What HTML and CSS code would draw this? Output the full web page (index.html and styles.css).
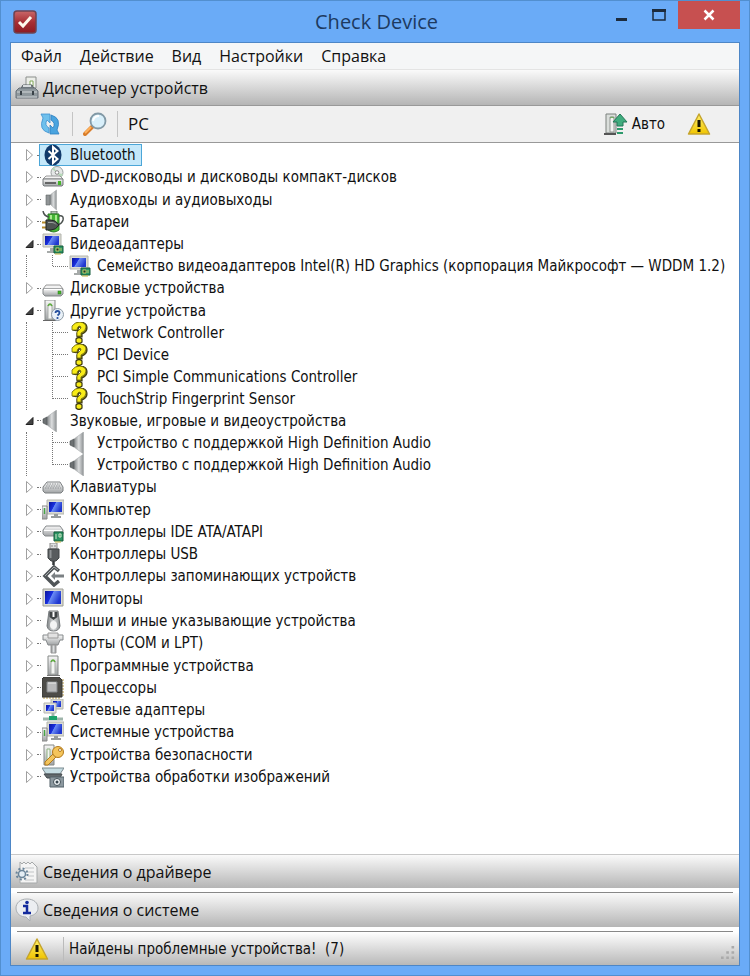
FILE: index.html
```html
<!DOCTYPE html>
<html lang="ru">
<head>
  <meta charset="UTF-8">
  <meta name="viewport" content="width=device-width, initial-scale=1">
  <title>Check Device</title>
  <link rel="stylesheet" href="styles.css">
</head>
<body>

  <!-- Icon set -->
  <svg class="sprite" aria-hidden="true">
    <defs>
      <linearGradient id="gScreen" x1="0" y1="0" x2="1" y2="0.4">
        <stop offset="0" stop-color="#0a149c"/><stop offset="0.45" stop-color="#1a30e0"/><stop offset="0.5" stop-color="#6a8cf4"/><stop offset="1" stop-color="#2038d0"/>
      </linearGradient>
      <linearGradient id="gMetal" x1="0" y1="0" x2="0" y2="1">
        <stop offset="0" stop-color="#f8f8f8"/><stop offset="1" stop-color="#a0a3a5"/>
      </linearGradient>
      <linearGradient id="gSide" x1="0" y1="0" x2="1" y2="0">
        <stop offset="0" stop-color="#808486"/><stop offset="0.5" stop-color="#dcdedf"/><stop offset="1" stop-color="#8d9193"/>
      </linearGradient>
      <linearGradient id="gWarn" x1="0" y1="0" x2="0" y2="1">
        <stop offset="0" stop-color="#fff06a"/><stop offset="1" stop-color="#f0c400"/>
      </linearGradient>
      <linearGradient id="gRed" x1="0" y1="0" x2="0" y2="1">
        <stop offset="0" stop-color="#c9686a"/><stop offset="0.5" stop-color="#a82f35"/><stop offset="1" stop-color="#8d1a22"/>
      </linearGradient>
    </defs>

    <symbol id="open" viewBox="0 0 14 14"><path d="M10 3.500v7H3z" fill="#444" stroke="#222"/></symbol>
    <symbol id="closed" viewBox="0 0 14 14"><path d="M3.500 1.500L9.500 7l-6 5.500z" fill="#fff" stroke="#a0a0a0"/></symbol>

    <symbol id="bluetooth" viewBox="0 0 22 22">
      <ellipse cx="11" cy="11" rx="8.500" ry="10.500" fill="#123a6b"/>
      <path d="M6.500 7l9 8-4.500 4V3l4.500 4-9 8" fill="none" stroke="#fff" stroke-width="2"/>
    </symbol>
    <symbol id="disk" viewBox="0 0 22 22">
      <path d="M4 8h14l3 4H1z" fill="#f3f3f3" stroke="#999"/>
      <path d="M1 12h20v5l-2 2H3l-2-2z" fill="url(#gMetal)" stroke="#85898b"/>
      <path d="M2 12.500h18" stroke="#fff"/>
      <rect x="16" y="14" width="3" height="3" fill="#46b52a" stroke="#277b18" stroke-width=".5"/>
    </symbol>
    <symbol id="dvd" viewBox="0 0 22 22">
      <circle cx="15" cy="6.500" r="6" fill="#e4e7e7" stroke="#9aa0a0"/>
      <path d="M15 7l-5-4 2-2zM15 7l6 1-2 4z" fill="#b6d8b8"/>
      <circle cx="15" cy="6.500" r="1.800" fill="#fff" stroke="#888"/>
      <path d="M4 10h14l3 3H1z" fill="#f3f3f3" stroke="#999"/>
      <path d="M1 13h20v6l-1 1H2l-1-1z" fill="url(#gMetal)" stroke="#777b7d"/>
      <path d="M3 17h11" stroke="#444" stroke-width="1.500"/>
      <rect x="16" y="15" width="3" height="4" fill="#46b52a"/>
    </symbol>
    <symbol id="speaker" viewBox="0 0 22 22">
      <path d="M14.500 0v22L5 15V7z" fill="url(#gSide)" stroke="#a6a9ab" stroke-width=".6"/>
      <path d="M1 9l4-2v8l-4-2z" fill="#6c7072" stroke="#4c5052" stroke-width=".6"/>
    </symbol>
    <symbol id="audio" viewBox="0 0 22 22">
      <path d="M14.500 1v20L8 15V6z" fill="url(#gSide)" stroke="#a6a9ab" stroke-width=".6"/>
      <path d="M4 6h4v10H4z" fill="#909496" stroke="#606466" stroke-width=".6"/>
    </symbol>
    <symbol id="battery" viewBox="0 0 22 22">
      <path d="M9 0h6v3H9z" fill="#b9c4b9" stroke="#687868"/>
      <path d="M6 3h11v16q-5 4-11 0z" fill="#45b535" stroke="#2c7d25"/>
      <path d="M9 4v5M14 4v13" stroke="#a9ea8e" stroke-width="2"/>
      <path d="M1 0q1 5 6 6M17 5q5-1 4 4-1 4-6 5" fill="none" stroke="#4c5250" stroke-width="1.500"/>
      <path d="M0 11.500h6M0 16.500h6" stroke="#b58a2c" stroke-width="1.800"/>
      <path d="M4 9h5q5 0 8 5-3 5-8 5H4z" fill="#4e5352" stroke="#202423"/>
      <path d="M6 11.500h4q3 0 4 2" fill="none" stroke="#9ca09f"/>
    </symbol>
    <symbol id="monitor" viewBox="0 0 22 22">
      <path d="M1 1h20v17H1z" fill="#dadbd4" stroke="#9c9d95"/>
      <path d="M3 3h16v13H3z" fill="url(#gScreen)"/>
    </symbol>
    <symbol id="video" viewBox="0 0 22 22">
      <path d="M1 1h18v13H1z" fill="#dadbd4" stroke="#b4b5ad"/>
      <path d="M3 3h14v9H3z" fill="url(#gScreen)"/>
      <path d="M8 15h4v3h3v2H5v-2h3z" fill="#a6aaa9"/>
      <path d="M12 13h9v7h-9z" fill="#2c9564" stroke="#145c3a"/>
      <path d="M14 15h3v3h-3zM19 15v3" fill="#123d2a" stroke="#e4d66b" stroke-width=".8"/>
      <path d="M13 21h6" stroke="#c5b440"/>
    </symbol>
    <symbol id="tower" viewBox="0 0 22 22">
      <path d="M6 1h10v19H6z" fill="url(#gMetal)" stroke="#858987"/>
      <path d="M9 6h4v13H9z" fill="#f3f4f2" stroke="#a9adaa"/>
      <path d="M9 7q2-4 4 0" stroke="#5dad3d" fill="none" stroke-width="1.500"/>
      <path d="M5 20.500h13" stroke="#777"/>
    </symbol>
    <symbol id="other" viewBox="0 0 22 22">
      <path d="M3 0h10v20H3z" fill="url(#gMetal)" stroke="#858987"/>
      <path d="M6 5h4v14H6z" fill="#f3f4f2" stroke="#a9adaa"/><path d="M6 6q2-4 4 0" fill="none" stroke="#5dad3d" stroke-width="1.500"/><path d="M1 20.500h13" stroke="#666"/>
      <circle cx="15.500" cy="14.500" r="6" fill="#e9f1f8" stroke="#8d9aa5"/>
      <path d="M13.500 13q0-2 2-2t2 2q0 1-2 2.500" fill="none" stroke="#244f9d" stroke-width="1.800"/><circle cx="15.500" cy="18" r="1.100" fill="#244f9d"/>
    </symbol>
    <symbol id="unknown" viewBox="0 0 22 22">
      <path d="M4 8V4q3-4 8-4 6 1 6 6 0 4-5 6v3H8v-4l4-4q1-2-1-2-2 0-2 4z" fill="#77720f" stroke="#3a3710" stroke-width="1.200"/>
      <path d="M3 8V4q3-4 8-4 6 1 6 5 0 4-5 6v3H8v-4l4-4q0-2-2-2-2 1-2 4z" fill="#f8ec17" stroke="#6a6412" stroke-width=".8"/>
      <path d="M7 17q3-3 6 0v3q-3 3-6 0z" fill="#f8ec17" stroke="#3a3710" stroke-width="1.200"/>
    </symbol>
    <symbol id="keyboard" viewBox="0 0 22 22">
      <path d="M5 6h13l3 5v4l-2 2H3l-2-2v-4z" fill="url(#gMetal)" stroke="#7c8082"/>
      <path d="M5 8h13M4 10h15M3 12h16" stroke="#909496" stroke-dasharray="1.500 1"/>
    </symbol>
    <symbol id="computer" viewBox="0 0 22 22">
      <path d="M5 1h17v14H5z" fill="#dadbd4" stroke="#b4b5ad"/><path d="M7 3h13v10H7z" fill="url(#gScreen)"/>
      <path d="M12 15h4v2h3v2H9v-2h3z" fill="#979c9d"/>
      <path d="M0 7h5v13H0z" fill="url(#gMetal)" stroke="#888"/><path d="M2.500 9v6" stroke="#49a448" stroke-width="1.500"/>
    </symbol>
    <symbol id="ide" viewBox="0 0 22 22">
      <path d="M4 5h14l3 4v4l-2 2H3l-2-2V9z" fill="url(#gMetal)" stroke="#85898b"/><path d="M2 9.500h18" stroke="#fff"/>
      <path d="M12 11h9v9h-9z" fill="#2c9564" stroke="#145c3a"/><path d="M14 13v5M17 13h2v3h-2z" stroke="#cde3c5" fill="none"/>
      <path d="M13 21h6" stroke="#c5b440"/>
    </symbol>
    <symbol id="usb" viewBox="0 0 22 22">
      <path d="M8 0h7v6H8z" fill="#dedfdf" stroke="#888"/><path d="M10 2v2M13 2v2" stroke="#888"/>
      <path d="M6 6h11v9l-3 3H9l-3-3z" fill="#585c5e" stroke="#414546"/><path d="M8.500 7v8" stroke="#8e9294" stroke-width="2"/><path d="M11.500 18v4" stroke="#34383a" stroke-width="2.500"/>
    </symbol>
    <symbol id="storage" viewBox="0 0 22 22">
      <path d="M17 6l-5-4-9 9 9 9 5-4" fill="none" stroke="#505558" stroke-width="3.500"/>
      <path d="M9 11l4-4v2.500h9v3h-9V15z" fill="#7b8083"/>
      <path d="M16 5l-4-3-9 9" fill="none" stroke="#a7abad"/>
    </symbol>
    <symbol id="mouse" viewBox="0 0 22 22">
      <path d="M7 1h9l2 15q-1 5-6.500 5T5 16z" fill="url(#gSide)" stroke="#777b7d"/>
      <path d="M7.500 2v5l4 3 4-3V2z" fill="#404446"/><path d="M11.500 2v5" stroke="#fff" stroke-width="2"/><ellipse cx="11.500" cy="15" rx="3.500" ry="4" fill="#f4f4f4"/>
    </symbol>
    <symbol id="port" viewBox="0 0 22 22">
      <path d="M1 3h20v5h-3l-2 5H6L4 8H1z" fill="url(#gMetal)" stroke="#85898b"/>
      <path d="M6 1h10v5H6z" fill="#e2e2e2" stroke="#999"/><path d="M9 13h5v8H9z" fill="url(#gSide)" stroke="#999"/>
    </symbol>
    <symbol id="cpu" viewBox="0 0 22 22">
      <path d="M2 3h20M2 6h20M2 9h20M2 12h20M2 15h20M2 18h20M2 19v3M5 19v3M8 19v3M11 19v3M14 19v3M17 19v3" stroke="#ba9b45"/>
      <path d="M2 0h15l3 3v17H0V2z" fill="#4d4c48" stroke="#393835"/><path d="M5 5h10v10H5z" fill="#b9babb" stroke="#85888a"/><path d="M6 6h8" stroke="#eee"/>
    </symbol>
    <symbol id="network" viewBox="0 0 22 22">
      <path d="M9 0h12v10H9z" fill="#dadbd4" stroke="#b4b5ad"/><path d="M11 2h8v6h-8z" fill="url(#gScreen)"/>
      <path d="M2 4h12v10H2z" fill="#e3e4df" stroke="#b4b5ad"/><path d="M4 6h8v6H4z" fill="url(#gScreen)"/>
      <path d="M11 14v5M1 20h20" stroke="#9fb5ab" stroke-width="3"/><path d="M7 17h8v4H7z" fill="#1ba36a"/>
    </symbol>
    <symbol id="key" viewBox="0 0 22 22">
      <path d="M2 1h10v20H2z" fill="url(#gMetal)" stroke="#858987"/><path d="M5 5h3v14H5z" fill="#f3f4f2" stroke="#8fb382"/>
      <path d="M11 10l3 3-8 8H3v-3z" fill="#f2c45c" stroke="#b27a1c"/>
      <circle cx="16" cy="8" r="5.500" fill="#f5c55b" stroke="#b27a1c"/><circle cx="18" cy="6" r="1.500" fill="#fff" stroke="#b27a1c"/>
    </symbol>
    <symbol id="camera" viewBox="0 0 22 22">
      <path d="M0 2h22l-4 6H4z" fill="#c5dce2" stroke="#7b8a90"/><path d="M2 8h18l-2 4H5z" fill="#62696c" stroke="#454b4e"/>
      <path d="M8 11h14v10H8z" fill="#8c989f" stroke="#536069"/><circle cx="15" cy="16" r="3.500" fill="#f1f5f7" stroke="#435057"/><circle cx="15" cy="16" r="1.500" fill="#38464f"/>
    </symbol>

    <symbol id="check" viewBox="0 0 24 24">
      <rect x="1" y="1" width="22" height="22" rx="3" fill="url(#gRed)" stroke="#6d4351" stroke-width="1.500"/>
      <path d="M6 12l4 4 8-9" fill="none" stroke="#fff8ed" stroke-width="3"/>
    </symbol>
    <symbol id="manager" viewBox="0 0 24 24">
      <path d="M11 1h10v11H11z" fill="#eceee9" stroke="#8b8f8c"/><path d="M15 5h3v5h-3z" fill="#fff" stroke="#7fa556"/>
      <path d="M5 14l3-5h9l3 5z" fill="#777f83" stroke="#596064"/><path d="M8 10h8" stroke="#d8dcde" stroke-width="2"/>
      <path d="M1 15l3-3h16l3 3v7H1z" fill="#8f989d" stroke="#687178"/><path d="M2 16h20M2 21h20" stroke="#d1d6d8"/><path d="M6 15v4M18 15v4" stroke="#394248" stroke-width="2"/>
    </symbol>
    <symbol id="refresh" viewBox="0 0 24 24">
      <path d="M3 2h9v9L9 8q-3 5 2 8v5Q0 18 5 6z" fill="#6fc0ec" stroke="#3f91cf" stroke-width=".8"/>
      <path d="M21 22h-9v-9l3 3q3-5-2-8V3q11 3 6 15z" fill="#4aa4df" stroke="#2f80c0" stroke-width=".8"/>
    </symbol>
    <symbol id="search" viewBox="0 0 24 24">
      <path d="M10 14l-8 8" stroke="#d87c2a" stroke-width="4" stroke-linecap="round"/><path d="M8 15l-6 6" stroke="#ffb15c" stroke-width="2"/>
      <circle cx="15" cy="9" r="7.500" fill="#d8effa" stroke="#8299a6" stroke-width="1.800"/><path d="M10 9q1-5 6-5" fill="none" stroke="#fff" stroke-width="2"/>
    </symbol>
    <symbol id="auto" viewBox="0 0 24 24">
      <path d="M2 2h10v19H2z" fill="#dadedb" stroke="#7c817e"/><path d="M6 5h4v15H6z" fill="#f3f4f2" stroke="#929793"/><path d="M6 6q2-2 4 0" stroke="#64a450" fill="none"/><path d="M0 22h12" stroke="#555" stroke-width="2"/>
      <path d="M16 2l7 8h-4v4h-6v-4H9z" fill="#40ac7e" stroke="#237756"/><path d="M13 17h6M13 21h6" stroke="#2d9a6c" stroke-width="2"/>
    </symbol>
    <symbol id="warning" viewBox="0 0 24 24">
      <path d="M12 2l10.500 20h-21z" fill="url(#gWarn)" stroke="#c5a42c" stroke-linejoin="round" stroke-width="1.500"/>
      <path d="M12 8v7M12 17v3" stroke="#171400" stroke-width="3"/>
    </symbol>
    <symbol id="driver" viewBox="0 0 24 24">
      <path d="M5 2l2 2 2-2 2 2 2-2 2 2 2-2 5 5v16H5z" fill="#f4f4f4" stroke="#a6a9aa"/><path d="M10 8h9M13 12h6M13 16h6M10 20h9" stroke="#c1c4c6"/>
      <circle cx="7" cy="14" r="3.500" fill="#e4edf4" stroke="#6a8499" stroke-width="1.500"/><circle cx="7" cy="14" r="5.500" fill="none" stroke="#6a8499" stroke-width="2" stroke-dasharray="2 2.300"/>
    </symbol>
    <symbol id="info" viewBox="0 0 24 24">
      <path d="M12 1C5 1 1 5 1 10c0 6 5 9 10 9l4 4v-5c5-1 8-4 8-8 0-5-4-9-11-9z" fill="#eceef1" stroke="#a9aeb2"/>
      <path d="M8 8h4v7M8 15h8" fill="none" stroke="#142b9d" stroke-width="2.500"/><circle cx="12" cy="4.500" r="1.800" fill="#142b9d"/>
    </symbol>
  </svg>

  <div class="window">
    <header class="titlebar">
      <svg class="icon-lg"><use href="#check"/></svg>
      <h1>Check Device</h1>
      <div class="controls">
        <button class="control" aria-label="Свернуть"><svg viewBox="0 0 14 14"><path d="M2 11.500h11" stroke="#1c2b3d" stroke-width="3"/></svg></button>
        <button class="control" aria-label="Развернуть"><svg viewBox="0 0 14 14"><path d="M1 2v10h12V2" fill="none" stroke="#1c2b3d" stroke-width="1.500"/><path d="M0 2.500h14" stroke="#1c2b3d" stroke-width="3"/></svg></button>
        <button class="control close" aria-label="Закрыть"><svg viewBox="0 0 14 14"><path d="M2.500 2.500l9 9M11.500 2.500l-9 9" stroke="#fff" stroke-width="2.500"/></svg></button>
      </div>
    </header>

    <main class="content">
      <nav class="menu">
        <button>Файл</button>
        <button>Действие</button>
        <button>Вид</button>
        <button>Настройки</button>
        <button>Справка</button>
      </nav>

      <button class="panel panel-top"><svg class="icon-lg"><use href="#manager"/></svg>Диспетчер устройств</button>

      <div class="toolbar">
        <button class="tool" aria-label="Обновить"><svg class="icon-lg"><use href="#refresh"/></svg></button>
        <button class="tool split" aria-label="Поиск"><svg class="icon-lg"><use href="#search"/></svg></button>
        <span class="pc split">PC</span>
        <button class="tool auto"><svg class="icon-lg"><use href="#auto"/></svg>Авто</button>
        <button class="tool" aria-label="Проблемы"><svg class="icon-lg"><use href="#warning"/></svg></button>
      </div>

      <ul class="tree">
        <li><div class="row"><button class="toggle" aria-label="Bluetooth"><svg><use href="#closed"/></svg></button><span class="dash"></span><span class="label selected"><svg class="icon"><use href="#bluetooth"/></svg>Bluetooth</span></div></li>
        <li><div class="row"><button class="toggle" aria-label="DVD"><svg><use href="#closed"/></svg></button><span class="dash"></span><span class="label"><svg class="icon"><use href="#dvd"/></svg>DVD-дисководы и дисководы компакт-дисков</span></div></li>
        <li><div class="row"><button class="toggle" aria-label="Аудио"><svg><use href="#closed"/></svg></button><span class="dash"></span><span class="label"><svg class="icon"><use href="#audio"/></svg>Аудиовходы и аудиовыходы</span></div></li>
        <li><div class="row"><button class="toggle" aria-label="Батареи"><svg><use href="#closed"/></svg></button><span class="dash"></span><span class="label"><svg class="icon"><use href="#battery"/></svg>Батареи</span></div></li>
        <li>
          <div class="row"><button class="toggle" aria-label="Видеоадаптеры"><svg><use href="#open"/></svg></button><span class="dash"></span><span class="label"><svg class="icon"><use href="#video"/></svg>Видеоадаптеры</span></div>
          <ul class="children">
            <li class="row"><span class="dash"></span><span class="label"><svg class="icon"><use href="#video"/></svg>Семейство видеоадаптеров Intel(R) HD Graphics (корпорация Майкрософт — WDDM 1.2)</span></li>
          </ul>
        </li>
        <li><div class="row"><button class="toggle" aria-label="Диски"><svg><use href="#closed"/></svg></button><span class="dash"></span><span class="label"><svg class="icon"><use href="#disk"/></svg>Дисковые устройства</span></div></li>
        <li>
          <div class="row"><button class="toggle" aria-label="Другие"><svg><use href="#open"/></svg></button><span class="dash"></span><span class="label"><svg class="icon"><use href="#other"/></svg>Другие устройства</span></div>
          <ul class="children">
            <li class="row"><span class="dash"></span><span class="label"><svg class="icon"><use href="#unknown"/></svg>Network Controller</span></li>
            <li class="row"><span class="dash"></span><span class="label"><svg class="icon"><use href="#unknown"/></svg>PCI Device</span></li>
            <li class="row"><span class="dash"></span><span class="label"><svg class="icon"><use href="#unknown"/></svg>PCI Simple Communications Controller</span></li>
            <li class="row"><span class="dash"></span><span class="label"><svg class="icon"><use href="#unknown"/></svg>TouchStrip Fingerprint Sensor</span></li>
          </ul>
        </li>
        <li>
          <div class="row"><button class="toggle" aria-label="Звук"><svg><use href="#open"/></svg></button><span class="dash"></span><span class="label"><svg class="icon"><use href="#speaker"/></svg>Звуковые, игровые и видеоустройства</span></div>
          <ul class="children">
            <li class="row"><span class="dash"></span><span class="label"><svg class="icon"><use href="#speaker"/></svg>Устройство с поддержкой High Definition Audio</span></li>
            <li class="row"><span class="dash"></span><span class="label"><svg class="icon"><use href="#speaker"/></svg>Устройство с поддержкой High Definition Audio</span></li>
          </ul>
        </li>
        <li><div class="row"><button class="toggle" aria-label="Клавиатуры"><svg><use href="#closed"/></svg></button><span class="dash"></span><span class="label"><svg class="icon"><use href="#keyboard"/></svg>Клавиатуры</span></div></li>
        <li><div class="row"><button class="toggle" aria-label="Компьютер"><svg><use href="#closed"/></svg></button><span class="dash"></span><span class="label"><svg class="icon"><use href="#computer"/></svg>Компьютер</span></div></li>
        <li><div class="row"><button class="toggle" aria-label="IDE"><svg><use href="#closed"/></svg></button><span class="dash"></span><span class="label"><svg class="icon"><use href="#ide"/></svg>Контроллеры IDE ATA/ATAPI</span></div></li>
        <li><div class="row"><button class="toggle" aria-label="USB"><svg><use href="#closed"/></svg></button><span class="dash"></span><span class="label"><svg class="icon"><use href="#usb"/></svg>Контроллеры USB</span></div></li>
        <li><div class="row"><button class="toggle" aria-label="Контроллеры"><svg><use href="#closed"/></svg></button><span class="dash"></span><span class="label"><svg class="icon"><use href="#storage"/></svg>Контроллеры запоминающих устройств</span></div></li>
        <li><div class="row"><button class="toggle" aria-label="Мониторы"><svg><use href="#closed"/></svg></button><span class="dash"></span><span class="label"><svg class="icon"><use href="#monitor"/></svg>Мониторы</span></div></li>
        <li><div class="row"><button class="toggle" aria-label="Мыши"><svg><use href="#closed"/></svg></button><span class="dash"></span><span class="label"><svg class="icon"><use href="#mouse"/></svg>Мыши и иные указывающие устройства</span></div></li>
        <li><div class="row"><button class="toggle" aria-label="Порты"><svg><use href="#closed"/></svg></button><span class="dash"></span><span class="label"><svg class="icon"><use href="#port"/></svg>Порты (COM и LPT)</span></div></li>
        <li><div class="row"><button class="toggle" aria-label="Программные"><svg><use href="#closed"/></svg></button><span class="dash"></span><span class="label"><svg class="icon"><use href="#tower"/></svg>Программные устройства</span></div></li>
        <li><div class="row"><button class="toggle" aria-label="Процессоры"><svg><use href="#closed"/></svg></button><span class="dash"></span><span class="label"><svg class="icon"><use href="#cpu"/></svg>Процессоры</span></div></li>
        <li><div class="row"><button class="toggle" aria-label="Сеть"><svg><use href="#closed"/></svg></button><span class="dash"></span><span class="label"><svg class="icon"><use href="#network"/></svg>Сетевые адаптеры</span></div></li>
        <li><div class="row"><button class="toggle" aria-label="Системные"><svg><use href="#closed"/></svg></button><span class="dash"></span><span class="label"><svg class="icon"><use href="#computer"/></svg>Системные устройства</span></div></li>
        <li><div class="row"><button class="toggle" aria-label="Безопасность"><svg><use href="#closed"/></svg></button><span class="dash"></span><span class="label"><svg class="icon"><use href="#key"/></svg>Устройства безопасности</span></div></li>
        <li><div class="row"><button class="toggle" aria-label="Изображения"><svg><use href="#closed"/></svg></button><span class="dash"></span><span class="label"><svg class="icon"><use href="#camera"/></svg>Устройства обработки изображений</span></div></li>
      </ul>

      <button class="panel"><svg class="icon-lg"><use href="#driver"/></svg>Сведения о драйвере</button>
      <hr>
      <button class="panel panel-plain"><svg class="icon-lg"><use href="#info"/></svg>Сведения о системе</button>
      <hr>
      <footer class="status">
        <svg class="icon-lg"><use href="#warning"/></svg>
        <span class="message">Найдены проблемные устройства!&nbsp; (7)</span>
        <svg class="grip" viewBox="0 0 16 16"><path d="M12 1h3v3h-3zM6 7h3v3H6zM12 7h3v3h-3zM0 13h3v3H0zM6 13h3v3H6zM12 13h3v3h-3z" fill="#aaa"/></svg>
      </footer>
    </main>
  </div>

</body>
</html>
```

FILE: styles.css
```css
* {
  box-sizing: border-box;
}

body {
  margin: 0;
  font-family: "DejaVu Sans Condensed", "Noto Sans", sans-serif;
  font-size: 15px;
  color: #111;
}

button {
  padding: 0;
  border: none;
  background: none;
  font: inherit;
  color: inherit;
}

svg {
  display: block;
  flex: none;
}

.sprite {
  position: absolute;
  width: 0;
  height: 0;
}

.icon {
  width: 22px;
  height: 22px;
}

.icon-lg {
  width: 24px;
  height: 24px;
}

.window {
  display: flex;
  flex-direction: column;
  min-height: 100vh;
  padding: 0 9px 9px;
  background: #6aabf7;
  border: 1px solid #528fcf;
}

/* Title bar */
.titlebar {
  display: grid;
  grid-template-columns: 1fr auto 1fr;
  height: 41px;
  padding-left: 3px;
  align-items: center;
}

.titlebar h1 {
  margin: 0;
  font-family: "Open Sans", sans-serif;
  font-size: 20px;
  font-weight: 400;
  color: #1d3a60;
}

.controls {
  display: flex;
  justify-content: flex-end;
  align-self: start;
}

.control {
  display: flex;
  width: 38px;
  height: 28px;
  align-items: center;
  justify-content: center;
}

.control svg {
  width: 14px;
  height: 14px;
}

.close {
  width: 62px;
  background: #c75050;
}

.content {
  display: flex;
  flex: 1;
  flex-direction: column;
  border: 1px solid #4d86c6;
  background: #fff;
}

/* Menu */
.menu {
  display: flex;
  height: 27px;
  padding: 0 10px;
  gap: 18px;
  background: #f5f6f7;
  border-bottom: 1px solid #e4e4e4;
  font-family: "Open Sans", sans-serif;
  font-size: 16px;
}

/* Section bars */
.panel {
  display: flex;
  height: 34px;
  padding: 0 4px;
  gap: 4px;
  align-items: center;
  border-top: 1px solid #c8c8c8;
  background: linear-gradient(#fafafa, #b5b5b5);
  font-family: "Open Sans", sans-serif;
  font-size: 16px;
}

.panel-top {
  height: 36px;
  border-top: none;
  border-bottom: 1px solid #999;
}

.panel-plain {
  border-top: none;
}

hr {
  width: calc(100% - 12px);
  margin: 4px auto 0;
  border: none;
  border-top: 1px solid #888;
}

/* Toolbar */
.toolbar {
  display: flex;
  height: 37px;
  padding: 0 28px 0 27px;
  gap: 10px;
  align-items: center;
  background: #f0f0f0;
  border-bottom: 1px solid #999;
}

.tool {
  display: flex;
  gap: 4px;
  align-items: center;
}

.split {
  padding-left: 10px;
  border-left: 1px solid #c4c4c4;
}

.pc {
  line-height: 26px;
  font-family: "Open Sans", sans-serif;
  font-size: 17px;
}

.auto {
  margin-left: auto;
  margin-right: 12px;
}

/* Device tree */
ul {
  margin: 0;
  padding: 0;
  list-style: none;
}

.tree {
  display: flex;
  flex: 1;
  flex-direction: column;
  justify-content: space-between;
  padding: 1px 0 66px 12px;
}

.row {
  display: flex;
  height: 22px;
  align-items: center;
  white-space: nowrap;
}

.toggle {
  width: 14px;
  height: 14px;
}

.toggle svg {
  width: 14px;
  height: 14px;
}

.dash {
  width: 4px;
  margin-right: -2px;
  border-top: 1px dotted #777;
}

.label {
  display: flex;
  height: 22px;
  padding: 0 5px 0 2px;
  gap: 6px;
  align-items: center;
  border: 1px solid transparent;
}

.selected {
  background: #c5e8fa;
  border-color: #4ba6d8;
}

.children {
  position: relative;
  margin-left: 3px;
  padding-left: 26px;
  border-left: 1px dotted #777;
}

.children::before {
  content: "";
  position: absolute;
  top: 0;
  bottom: 11px;
  left: 25px;
  border-left: 1px dotted #777;
}

.children .dash {
  width: 15px;
}

/* Status bar */
.status {
  display: flex;
  height: 33px;
  padding: 0 4px 0 14px;
  gap: 14px;
  align-items: center;
  background: linear-gradient(#fff, #b8b8b8);
}

.message {
  padding-left: 5px;
  line-height: 24px;
  border-left: 1px solid #bbb;
}

.grip {
  width: 14px;
  height: 14px;
  margin: auto 0 6px auto;
}
```
